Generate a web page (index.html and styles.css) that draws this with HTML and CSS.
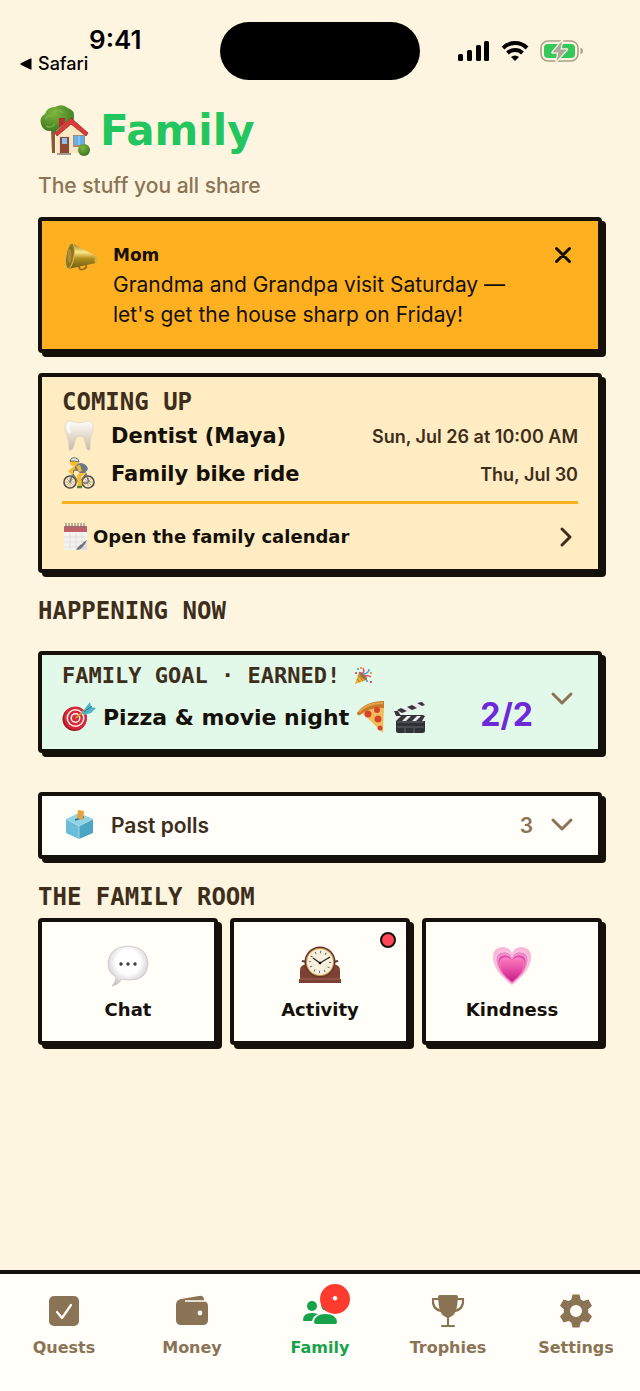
FILE: index.html
```
<!DOCTYPE html>
<html lang="en">
<head>
  <meta charset="UTF-8" />
  <meta name="viewport" content="width=device-width, initial-scale=1.0"/>
  <title>Family</title>
  <link rel="stylesheet" href="styles.css">
</head>
<body>
  <div class="status-bar">
    <div class="status-left">
      <span class="clock">9:41</span>
      <a class="back-link" href="#safari">
        <svg width="12" height="12" viewBox="0 0 12 12" aria-hidden="true"><path d="M11.500 1v10q0 1-1 .6L.7 6.700q-.8-.7 0-1.400L10.500.4q1-.4 1 .6z"/></svg>
        Safari
      </a>
    </div>
    <div class="island"></div>
    <div class="status-icons">
      <svg width="32" height="22" viewBox="0 0 32 22" aria-hidden="true">
        <rect x="0" y="14" width="5" height="7" rx="1.5"/><rect x="9" y="10" width="5" height="11" rx="1.5"/>
        <rect x="18" y="5" width="5" height="16" rx="1.5"/><rect x="26" y="1" width="5" height="20" rx="1.5"/>
      </svg>
      <svg width="28" height="22" viewBox="0 0 28 22" aria-hidden="true">
        <g fill="none" stroke="#000" stroke-width="4"><path d="M2 8a17 17 0 0 1 24 0"/><path d="M6.500 13a11 11 0 0 1 15 0"/></g>
        <path d="M14 21l-4-4a6 6 0 0 1 8 0z"/>
      </svg>
      <svg width="44" height="22" viewBox="0 0 44 22" aria-hidden="true">
        <rect x="1" y="1" width="37" height="20" rx="7" fill="none" stroke="#a99f89" stroke-width="1.6"/>
        <rect x="4" y="4" width="31" height="14" rx="4" fill="#34c759"/>
        <path d="M40.500 7.500v7q2.500-1 2.500-3.500t-2.500-3.500z" fill="#a99f89"/>
        <path d="M22 1L12.500 12.500h6L16.500 21 27 9.500h-6.500z" fill="#aaa99a" stroke="#fef5e0" stroke-width="2.5" stroke-linejoin="round" paint-order="stroke"/>
      </svg>
    </div>
  </div>

  <main class="page">
    <header class="page-header">
      <h1 class="page-title">
        <svg width="54" height="54" viewBox="0 0 54 54" aria-hidden="true">
          <defs>
            <radialGradient id="leaf" cx=".4" cy=".3" r=".8"><stop offset="0" stop-color="#7db63c"/><stop offset="1" stop-color="#34701f"/></radialGradient>
          </defs>
          <path d="M13 25l4 2v22h-3z" fill="#8a5a35"/>
          <path d="M3 20q-2-7 4-10 2-7 10-7 7-4 13 1 7 2 6 10-1 11-13 12-4 4-9 1-9 1-11-7z" fill="url(#leaf)"/>
          <path d="M7 15q3-5 8-3m0-5q6-2 10 2M8 22q5 3 9-2" fill="none" stroke="#91c653" stroke-width="1.5" opacity=".5"/>
          <path d="M21 14h6v9h-6z" fill="#b92e2c"/>
          <path d="M18 27l14-12 14 12v22H18z" fill="#fae8c4"/>
          <path d="M17 29L33 14l17 15-2 3-15-12-14 12z" fill="#d83c39" stroke="#a8252a" stroke-width=".8"/>
          <path d="M21 32h11v18H21z" fill="#eadfce"/><path d="M22 33h9v16h-9z" fill="#8f4935"/><path d="M24 34h5v6h-5z" fill="#86c3ef"/>
          <path d="M35 31h12v12H35z" fill="#a98a70"/><path d="M36 32h10v9H36z" fill="#66aee8"/><path d="M41 32v9" stroke="#9fd0f5"/>
          <path d="M19 49h14v2H19z" fill="#a39b92"/>
          <circle cx="46" cy="46" r="6" fill="url(#leaf)"/>
        </svg>
        Family
      </h1>
      <p class="subtitle">The stuff you all share</p>
    </header>

    <section class="card notice">
      <svg class="item-icon" viewBox="0 0 34 34" aria-hidden="true">
        <defs><linearGradient id="brass" x2="0" y2="1"><stop offset="0" stop-color="#8f6f16"/><stop offset=".35" stop-color="#ffe98a"/><stop offset=".6" stop-color="#b08d1c"/><stop offset="1" stop-color="#6d5a13"/></linearGradient></defs>
        <path d="M15 26q0 5 5 3 3-1 2-4" fill="none" stroke="#8d721a" stroke-width="1.8"/>
        <path d="M8 3l24 13q2 4 0 7L4 29z" fill="url(#brass)"/>
        <ellipse cx="6" cy="16" rx="4" ry="13" fill="#8f751d" stroke="#d9bd4e" transform="rotate(9 6 16)"/>
        <ellipse cx="5.500" cy="16" rx="2" ry="7" fill="#b48a38"/><ellipse cx="32" cy="19.500" rx="1.500" ry="4" fill="#d4b33a"/>
      </svg>
      <div class="notice-body">
        <h2 class="notice-from">Mom</h2>
        <p class="notice-text">Grandma and Grandpa visit Saturday — let's get the house sharp on Friday!</p>
      </div>
      <button class="close-button" type="button" aria-label="Dismiss">
        <svg width="18" height="18" viewBox="0 0 18 18" aria-hidden="true"><path d="M2.500 2.500l13 13m0-13l-13 13"/></svg>
      </button>
    </section>

    <section class="card coming-up">
      <h2 class="label">COMING UP</h2>
      <ul class="event-list">
        <li class="event">
          <svg class="item-icon" viewBox="0 0 34 34" aria-hidden="true">
            <defs><linearGradient id="tooth" x2="0" y2="1"><stop offset="0" stop-color="#fffdf8"/><stop offset="1" stop-color="#c9b8a8"/></linearGradient></defs>
            <path d="M3 6q2-6 9-3 5 2 10 0 7-3 9 3 1 5-2 11-1 4-1 13 0 2-2 1-2-1-3-8-1-6-5-6t-5 6q-1 7-4 8-2 1-2-1 0-9-2-13Q2 11 3 6z" fill="url(#tooth)" stroke="#ddd2c6" stroke-width=".7"/>
            <path d="M7 5q-2 4 1 9" fill="none" stroke="#fff" stroke-width="2.5" opacity=".8"/>
          </svg>
          <span class="event-name">Dentist (Maya)</span>
          <time class="event-date" datetime="07-26T10:00">Sun, Jul 26 at 10:00 AM</time>
        </li>
        <li class="event">
          <svg class="item-icon" viewBox="0 0 34 34" aria-hidden="true">
            <g fill="none" stroke="#4b4a47" stroke-width="1.6"><circle cx="8" cy="25" r="6"/><circle cx="26" cy="25" r="6"/></g>
            <path d="M2 25h12M8 19v12M4 21l8 8m0-8l-8 8M20 25h12m-6-6v12m-4-10l8 8m0-8l-8 8" stroke="#96938a" stroke-width=".7"/>
            <path d="M8 25l4-12h4m-6 3l7 10 7-9 3 8m-10 1h9" fill="none" stroke="#77736a" stroke-width="1.5"/>
            <path d="M13 10l-5 4 3 3" fill="none" stroke="#f6b927" stroke-width="2.5"/>
            <path d="M23 14l-6 5 1 10" fill="none" stroke="#f7bd28" stroke-width="4"/><path d="M15 30h5" stroke="#587f2c" stroke-width="2.5"/>
            <path d="M13 7l6-1q6 1 7 6l-3 4h-5l-5-4z" fill="#6d7883"/><path d="M14 9l4-1 2 6-3 1z" fill="#efb837"/>
            <circle cx="12" cy="5" r="4" fill="#f7bd28"/><path d="M8 4q1-4 6-3 3 1 3 4l-4-1z" fill="#e7edf1" stroke="#3f5262" stroke-width=".8"/>
          </svg>
          <span class="event-name">Family bike ride</span>
          <time class="event-date" datetime="07-30">Thu, Jul 30</time>
        </li>
      </ul>
      <a class="calendar-link" href="#calendar">
        <svg width="27" height="28" viewBox="0 0 27 28" aria-hidden="true">
          <path d="M2 6h23v14l-5 7H2z" fill="#f5f3f0"/><path d="M2 14h22M2 19h20M2 24h17M8 10v16M14 10v16M20 10v10" stroke="#d8d8da" stroke-width=".7"/>
          <path d="M2 3h23v6H2z" fill="#bd6067"/><path d="M4 0v5m3-5v5m3-5v5m3-5v5m3-5v5m3-5v5m3-5v5" stroke="#777173"/>
          <path d="M25 18v9H15q6-1 10-9z" fill="#dcdcdc"/><path d="M25 17q-4 2-5 4-3 1-6 6 7 0 11-10z" fill="#6e747a"/>
        </svg>
        <span>Open the family calendar</span>
        <svg class="chevron-right" width="12" height="20" viewBox="0 0 12 20" aria-hidden="true"><path d="M2 2l8 8-8 8"/></svg>
      </a>
    </section>

    <h2 class="label section-label">HAPPENING NOW</h2>
    <button class="card goal" type="button" aria-expanded="false">
      <span class="goal-main">
        <span class="label goal-label">FAMILY GOAL · EARNED!
          <svg width="18" height="18" viewBox="0 0 18 18" aria-hidden="true">
            <path d="M5 5l8 8L1 17z" fill="#e7ae37"/><path d="M4 8l5 6M3 12l3 3" stroke="#b7771d"/>
            <ellipse cx="9" cy="9" rx="2" ry="5.5" fill="#9b704c" transform="rotate(-45 9 9)"/>
            <path d="M8 7q3-2 1-6m2 8q4-1 6 1" fill="none" stroke="#e04c67" stroke-width="1.5"/><path d="M10 7q5-1 5-5" fill="none" stroke="#4ca0dc" stroke-width="1.5"/>
            <path d="M3 1h2v2H3zm9 12h2v2h-2z" fill="#64aee3"/><path d="M16 5h2v2h-2zM6 0h2v2H6z" fill="#e6a039"/><path d="M16 14h2v2h-2zM1 5h2v2H1z" fill="#d8578e"/>
          </svg>
        </span>
        <span class="goal-title">
          <svg class="item-icon" viewBox="0 0 34 34" aria-hidden="true">
            <circle cx="12.500" cy="19" r="12" fill="#a5151e"/><circle cx="13.500" cy="18" r="11.500" fill="#d9283b"/><circle cx="13.500" cy="18" r="9" fill="#fff4ed"/>
            <circle cx="13.500" cy="18" r="7.500" fill="#d9283b"/><circle cx="13.500" cy="18" r="5" fill="#fff4ed"/><circle cx="13.500" cy="18" r="3.500" fill="#d9283b"/>
            <path d="M13.500 18L25 9" stroke="#d49a39" stroke-width="2"/><path d="M20 13l4-6 4-5 1 5 5 1-5 5-7 2z" fill="#51b3c5"/><path d="M22 12l8-6" stroke="#237e95"/>
          </svg>
          Pizza &amp; movie night
          <svg width="30" height="34" viewBox="0 0 30 34" aria-hidden="true">
            <path d="M4 11L28 7l-1 26z" fill="#f3bd5b"/><path d="M1 13Q9 1 28 1v7Q13 7 4 15q-3 1-3-2z" fill="#c77928"/><path d="M3 12Q11 3 27 3" fill="none" stroke="#e4a44d" stroke-width="2"/>
            <g fill="#d7442b"><circle cx="12" cy="14" r="3.500"/><circle cx="21" cy="10" r="3"/><circle cx="22" cy="19" r="3.500"/><circle cx="24" cy="28" r="2.500"/></g>
          </svg>
          <svg width="34" height="34" viewBox="0 0 34 34" aria-hidden="true">
            <rect x="3" y="15" width="29" height="18" rx="2.500" fill="#303136"/><path d="M4 22h27M4 27h27M12 28v5m9-5v5" stroke="#74767b" stroke-width=".8"/>
            <path d="M1 11L31 1l1 5L3 16z" fill="#eceaea"/><path d="M4 10l5 3 5-2-6-3zM14 7l5 3 5-2-5-3zM24 3l5 3 3-1-3-3z" fill="#35363a"/>
            <path d="M3 16h29v5H3z" fill="#eceaea"/><path d="M8 16l-5 5h6l5-5zM18 16l-5 5h6l5-5zM28 16l-5 5h6l3-5zM1 11l2 5h5l-3-5z" fill="#35363a"/>
          </svg>
        </span>
      </span>
      <span class="goal-score">2/2</span>
      <svg class="chevron-down" viewBox="0 0 22 14" aria-hidden="true"><path d="M2 2l9 9 9-9"/></svg>
    </button>

    <button class="card polls" type="button" aria-expanded="false">
      <svg class="item-icon" viewBox="0 0 34 34" aria-hidden="true">
        <path d="M17 5l14 6-14 7-13-7z" fill="#8fd3e5"/><path d="M4 11l13 7v13L4 25z" fill="#6bbcd6"/><path d="M31 11l-14 7v13l14-6z" fill="#4ba5c3"/>
        <path d="M13 12l9-3" stroke="#286c86" stroke-width="1.5"/><path d="M16 2l6 1-1 9-6-2z" fill="#e9a13b"/><path d="M4 11l13 7 14-7M17 18v13" fill="none" stroke="#a6e1ef" stroke-width=".8"/>
      </svg>
      <span class="polls-name">Past polls</span>
      <span class="polls-count">3</span>
      <svg class="chevron-down" viewBox="0 0 22 14" aria-hidden="true"><path d="M2 2l9 9 9-9"/></svg>
    </button>

    <h2 class="label room-label">THE FAMILY ROOM</h2>
    <div class="room-grid">
      <a class="card room" href="#chat">
        <svg class="room-icon" viewBox="0 0 40 40" aria-hidden="true">
          <defs><radialGradient id="bubble" cx=".5" cy=".4" r=".6"><stop offset=".5" stop-color="#fff"/><stop offset="1" stop-color="#c6c6c8"/></radialGradient></defs>
          <path d="M20 0q20 1 20 18-1 16-18 16-5 0-8-1-4 6-10 7 4-4 4-9Q0 27 0 17 1 1 20 0z" fill="url(#bubble)" stroke="#b8b8bb" stroke-width=".6"/>
          <g fill="#3b3b3d"><circle cx="13" cy="18" r="1.700"/><circle cx="20" cy="18" r="1.700"/><circle cx="27" cy="18" r="1.700"/></g>
        </svg>
        <span>Chat</span>
      </a>
      <a class="card room" href="#activity">
        <span class="unread-dot"></span>
        <svg class="room-icon" viewBox="0 0 40 40" aria-hidden="true">
          <path d="M2 15l5 1v3h26v-3l5-1" fill="none" stroke="#683328" stroke-width="2"/>
          <path d="M-1 37v-4h1V24q0-5 7-6h26q7 1 7 6v9h1v4z" fill="#7c4034"/><path d="M0 33h40" stroke="#a26253"/>
          <circle cx="20" cy="16" r="15.500" fill="#6b342b"/><circle cx="20" cy="16" r="14" fill="#c79b4c"/><circle cx="20" cy="16" r="13" fill="#f7f0dd"/>
          <circle cx="20" cy="16" r="10" fill="none" stroke="#555049" stroke-width="2.400" stroke-dasharray=".8 4.436"/>
          <path d="M13 12l7 5 10-6" fill="none" stroke="#2f2c2a" stroke-width="1.400"/><circle cx="20" cy="17" r="1.300"/>
        </svg>
        <span>Activity</span>
      </a>
      <a class="card room" href="#kindness">
        <svg class="room-icon" viewBox="0 0 40 40" aria-hidden="true">
          <defs>
            <linearGradient id="pink" x2="0" y2="1"><stop offset="0" stop-color="#ff7dc0"/><stop offset="1" stop-color="#c71b86"/></linearGradient>
            <path id="heart" d="M20 39Q1 25 1 11 1 1 11 1q6 0 9 6 3-6 9-6 10 0 10 10 0 14-19 28z"/>
          </defs>
          <use href="#heart" fill="#f9b9da"/>
          <use href="#heart" fill="#ef82c2" stroke="#fcd6ea" transform="translate(3 5) scale(.85)"/>
          <use href="#heart" fill="#e04eab" stroke="#f9b6db" transform="translate(5 8) scale(.75)"/>
          <use href="#heart" fill="url(#pink)" stroke="#f792cd" transform="translate(7 11) scale(.65)"/>
        </svg>
        <span>Kindness</span>
      </a>
    </div>
  </main>

  <nav class="tab-bar" aria-label="Main">
    <a class="tab" href="#quests">
      <svg class="tab-icon" viewBox="0 0 36 36" aria-hidden="true"><rect x="3" y="3" width="30" height="30" rx="5"/><path d="M11 19l5 6 9-13" fill="none" stroke="#fffef9" stroke-width="2.200" stroke-linecap="round" stroke-linejoin="round"/></svg>
      Quests
    </a>
    <a class="tab" href="#money">
      <svg class="tab-icon" viewBox="0 0 36 36" aria-hidden="true"><path d="M2 12q0-5 5-6l18-3q4-1 5 3v2q4 1 4 5v14q0 5-5 5H7q-5 0-5-5z"/><path d="M11 8h20" stroke="#fffef9" stroke-width="1.500"/><circle cx="26" cy="20" r="2.400" fill="#fffef9"/></svg>
      Money
    </a>
    <a class="tab active" href="#family" aria-current="page">
      <span class="icon-wrap">
        <svg class="tab-icon" viewBox="0 0 36 36" aria-hidden="true">
          <circle cx="10" cy="13" r="5"/><path d="M1 27q0-7 9-7 3 0 6 1-5 2-6 7H2q-1 0-1-1z"/>
          <circle cx="25" cy="12" r="6"/><path d="M12 29q1-8 11.500-8T35 29q0 2-2 2H14q-2 0-2-2z"/>
        </svg>
        <span class="tab-badge">•</span>
      </span>
      Family
    </a>
    <a class="tab" href="#trophies">
      <svg class="tab-icon" viewBox="0 0 36 36" aria-hidden="true"><path d="M10 2h16q2 0 2 2-1 17-6 19-4 3-8 0-5-2-6-19 0-2 2-2z"/><path d="M9 6H3q-1 10 8 12M27 6h6q1 10-8 12M18 23v10M12 33h12" fill="none" stroke="currentColor" stroke-width="2.200" stroke-linecap="round"/></svg>
      Trophies
    </a>
    <a class="tab" href="#settings">
      <svg class="tab-icon" viewBox="0 0 36 36" aria-hidden="true"><path fill-rule="evenodd" d="M14.500 1.500h7l1.200 5 2.700 1.600 5-1.600 3.600 6.200-3.800 3.600v3.400l3.800 3.600-3.600 6.200-5-1.600-2.700 1.600-1.200 5h-7l-1.200-5-2.700-1.600-5 1.600L2 23.300l3.800-3.600v-3.400L2 12.700l3.600-6.200 5 1.600 2.700-1.600zM18 12a6 6 0 1 0 0 12 6 6 0 0 0 0-12z"/></svg>
      Settings
    </a>
  </nav>
</body>
</html>
```

FILE: styles.css
```
* {
  box-sizing: border-box;
}

body {
  margin: 0;
  min-height: 100vh;
  display: flex;
  flex-direction: column;
  font-family: Inter, sans-serif;
  background: #fef5e0;
  color: #15110a;
}

h1, h2, p, ul {
  margin: 0;
  padding: 0;
}

a {
  color: inherit;
  text-decoration: none;
}

button {
  font: inherit;
  color: inherit;
  text-align: left;
  cursor: pointer;
}

svg {
  flex-shrink: 0;
  overflow: visible;
}

/* status bar */

.status-bar {
  display: grid;
  grid-template-columns: 1fr 200px 1fr;
  padding-top: 22px;
  color: #000;
}

.status-left {
  display: flex;
  flex-direction: column;
  padding: 4px 0 0 20px;
}

.clock {
  padding-left: 69px;
  font-size: 26px;
  font-weight: 600;
  line-height: 28px;
}

.back-link {
  display: flex;
  align-items: center;
  gap: 6px;
  font-size: 18px;
  font-weight: 500;
  line-height: 20px;
}

.island {
  height: 58px;
  border-radius: 29px;
  background: #000;
}

.status-icons {
  display: flex;
  align-items: center;
  justify-content: center;
  gap: 11px;
  padding-right: 18px;
}

/* page */

.page {
  padding: 24px 38px 40px;
}

.page-header {
  margin-bottom: 16px;
}

.page-title {
  display: flex;
  align-items: center;
  gap: 8px;
  font-family: "DejaVu Sans", sans-serif;
  font-size: 42px;
  font-weight: bold;
  line-height: 54px;
  color: #22c55e;
}

.subtitle {
  margin-top: 13px;
  font-size: 21px;
  font-weight: 500;
  line-height: 30px;
  color: #8b7355;
}

.card {
  border: 4px solid #15110a;
  border-radius: 4px;
  box-shadow: 4px 4px 0 #15110a;
}

.label {
  font-family: "DejaVu Sans Mono", monospace;
  font-size: 24px;
  font-weight: bold;
  line-height: 24px;
  color: #3d2e1c;
}

.item-icon {
  width: 34px;
  height: 34px;
}

.chevron-right path,
.chevron-down path,
.close-button path {
  fill: none;
  stroke: currentColor;
  stroke-width: 3;
  stroke-linecap: round;
  stroke-linejoin: round;
}

.chevron-down {
  width: 22px;
  height: 14px;
  color: #8b7355;
}

/* message */

.notice {
  display: flex;
  gap: 15px;
  padding: 19px 22px;
  background: #ffb020;
}

.notice-body {
  flex: 1;
  line-height: 30px;
}

.notice-from {
  font-family: "DejaVu Sans", sans-serif;
  font-size: 17px;
}

.notice-text {
  font-size: 21px;
}

.close-button {
  display: flex;
  align-items: center;
  justify-content: center;
  width: 26px;
  height: 30px;
  padding: 0;
  border: none;
  background: none;
}

/* events */

.coming-up {
  margin-top: 20px;
  padding: 13px 20px 0;
  background: #ffecc2;
}

.event-list {
  margin-top: 3px;
  padding-bottom: 8px;
  border-bottom: 3px solid #ffb020;
  list-style: none;
}

.event {
  display: flex;
  align-items: center;
  gap: 15px;
  height: 38px;
}

.event-name {
  flex: 1;
  font-family: "DejaVu Sans", sans-serif;
  font-size: 21px;
  font-weight: bold;
}

.event-date {
  font-size: 18px;
  font-weight: 600;
  color: #3d2e1c;
}

.calendar-link {
  display: flex;
  align-items: center;
  gap: 4px;
  height: 65px;
  font-family: "DejaVu Sans", sans-serif;
  font-size: 18px;
  font-weight: bold;
}

.chevron-right {
  margin: 0 6px 0 auto;
  color: #3d2e1c;
}

/* goal and polls */

.section-label {
  margin: 26px 0 28px;
}

.goal {
  display: flex;
  width: 100%;
  align-items: center;
  padding: 9px 25px 15px 20px;
  background: #e2f9ea;
}

.goal-main {
  flex: 1;
}

.goal-label {
  display: flex;
  align-items: center;
  gap: 14px;
  font-size: 22px;
}

.goal-title {
  display: flex;
  align-items: center;
  gap: 7px;
  height: 34px;
  margin-top: 12px;
  font-family: "DejaVu Sans", sans-serif;
  font-size: 22px;
  font-weight: bold;
  white-space: nowrap;
}

.goal-score {
  align-self: flex-end;
  margin-right: 18px;
  font-size: 32px;
  font-weight: 700;
  line-height: 38px;
  color: #6d28d9;
}

.polls {
  display: flex;
  width: 100%;
  align-items: center;
  margin-top: 39px;
  padding: 12px 25px 13px 20px;
  background: #fffef9;
  font-size: 21px;
  font-weight: 600;
}

.polls-name {
  flex: 1;
  padding-left: 15px;
  color: #3d2e1c;
}

.polls-count {
  margin-right: 18px;
  color: #8b7355;
}

/* family room */

.room-label {
  margin: 26px 0 9px;
}

.room-grid {
  display: grid;
  grid-template-columns: repeat(3, 1fr);
  gap: 12px;
}

.room {
  position: relative;
  display: flex;
  flex-direction: column;
  align-items: center;
  gap: 12px;
  padding: 24px 4px 19px;
  background: #fffef9;
  font-family: "DejaVu Sans", sans-serif;
  font-size: 18px;
  font-weight: bold;
  line-height: 24px;
}

.room-icon {
  width: 40px;
  height: 40px;
}

.unread-dot {
  position: absolute;
  top: 10px;
  right: 10px;
  width: 16px;
  height: 16px;
  border: 2px solid #15110a;
  border-radius: 50%;
  background: #ff4757;
}

/* tabs */

.tab-bar {
  display: grid;
  grid-template-columns: repeat(5, 1fr);
  margin-top: auto;
  padding: 19px 0 31px;
  border-top: 4px solid #15110a;
  background: #fffef9;
}

.tab {
  display: flex;
  flex-direction: column;
  align-items: center;
  gap: 7px;
  font-family: "DejaVu Sans", sans-serif;
  font-size: 16px;
  font-weight: bold;
  line-height: 24px;
  color: #8b7355;
}

.tab.active {
  color: #16a34a;
}

.tab-icon {
  display: block;
  width: 36px;
  height: 36px;
  fill: currentColor;
}

.icon-wrap {
  position: relative;
}

.tab-badge {
  position: absolute;
  top: -9px;
  right: -12px;
  width: 30px;
  height: 30px;
  border-radius: 50%;
  background: #ff3b30;
  color: #fff;
  font-size: 12px;
  line-height: 30px;
  text-align: center;
}
```
